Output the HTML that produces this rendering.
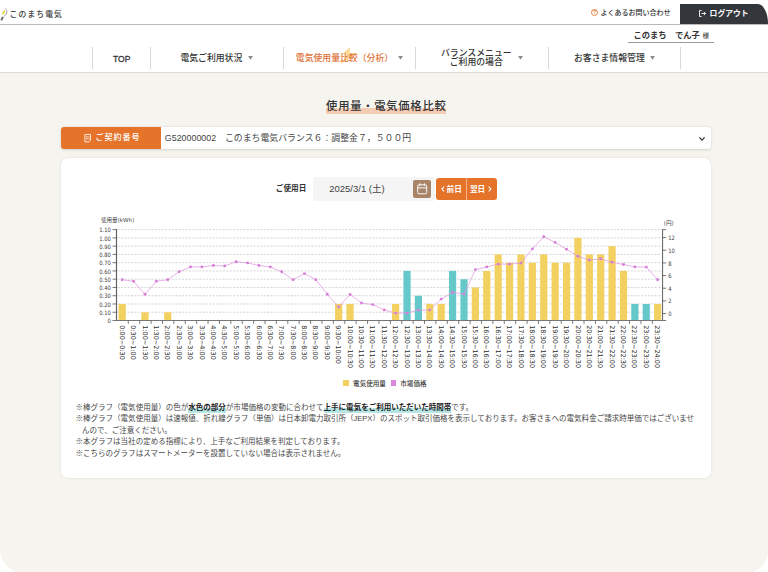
<!DOCTYPE html>
<html lang="ja">
<head>
<meta charset="utf-8">
<title>使用量・電気価格比較</title>
<style>
html,body{margin:0;padding:0;}
body{width:768px;height:572px;overflow:hidden;background:#fff;position:relative;
 font-family:"Liberation Sans","Noto Sans CJK JP",sans-serif;color:#333;}
.abs{position:absolute;white-space:nowrap;}
#logo{left:9.6px;top:7.6px;font-size:7.8px;letter-spacing:1.1px;font-weight:500;color:#3a3a3a;line-height:14px;}
#hline{left:0;top:24px;width:768px;height:1px;background:#b9b9b9;}
#faq{left:600.6px;top:7px;font-size:7px;line-height:12px;color:#333;font-weight:500;}
#faqi{left:590.8px;top:8.9px;width:5.6px;height:5.6px;border:0.9px solid #e8803f;border-radius:50%;color:#e8803f;font-size:5.2px;line-height:5.8px;text-align:center;font-weight:700;}
#logout{left:679.5px;top:4.4px;width:88.6px;height:19.6px;background:#33363b;border-top-right-radius:10.5px 19.6px;}
#logouttx{left:709.6px;top:6.6px;font-size:7.8px;line-height:14px;color:#fff;font-weight:700;}
#user{left:633.4px;top:27.5px;font-size:8.3px;line-height:14px;font-weight:700;color:#333;}
#user small{font-size:6.6px;font-weight:400;margin-left:2.8px;}
#uline{left:628px;top:41.8px;width:86px;height:1px;background:#9a9a9a;}
#navb{left:0;top:71.6px;width:768px;height:1.4px;background:#dcdad6;}
.sep{position:absolute;top:46.8px;width:1px;height:21.8px;background:#d8d8d8;margin-left:-0.3px;}
.nav{position:absolute;font-size:8.85px;line-height:9.2px;font-weight:500;color:#333;white-space:nowrap;text-align:center;}
.arr{position:absolute;font-size:5px;line-height:6px;color:#8e8e8e;top:55.2px;}
#main{left:0;top:73px;width:768px;height:499.5px;background:#f6f4ee;border-radius:0 0 22px 24px;}
#title{left:326.1px;top:97.8px;font-size:11.3px;letter-spacing:0.74px;line-height:16px;font-weight:500;color:#333;
 background:linear-gradient(transparent 65%,#f4cbb3 65%);}
#crow{left:61.3px;top:126.7px;width:649.4px;height:22px;background:#fff;border-radius:3px;box-shadow:0 0.5px 2.5px rgba(0,0,0,.15);}
#clab{left:61.3px;top:126.7px;width:100px;height:22px;background:#e5732a;border-radius:3px 0 0 3px;}
#clabtx{left:95.4px;top:131.1px;font-size:8px;letter-spacing:1px;line-height:14px;color:#fff;font-weight:500;}
#csel{left:164.8px;top:130.5px;font-size:8.88px;line-height:14px;color:#444;}
#card{left:61.3px;top:157.8px;width:649.4px;height:320.2px;background:#fff;border-radius:7px;box-shadow:0 0 3px rgba(0,0,0,.09);}
#dlab{left:275.8px;top:182.4px;font-size:7.65px;line-height:14px;font-weight:700;color:#333;}
#dinp{left:312.8px;top:177.2px;width:121.8px;height:23.4px;background:#f5f5f5;border-radius:3px;}
#dtx{left:329.2px;top:181.5px;font-size:9.5px;line-height:14px;color:#444;}
#cal{left:413.3px;top:180px;width:17.8px;height:17.8px;background:#a88569;border-radius:2px;}
#btn{left:435.8px;top:178.3px;width:61.6px;height:21.4px;background:#e5732a;border-radius:3px;}
#bdiv{left:466px;top:178.3px;width:0.8px;height:21.4px;background:#f3b48c;}
.btx{position:absolute;font-size:7.65px;line-height:14px;font-weight:700;color:#fff;top:182.9px;white-space:nowrap;}
svg.chart{position:absolute;left:0;top:205px;}
svg.chart text{font-family:"DejaVu Sans","Noto Sans CJK JP",sans-serif;fill:#444;}
svg.chart .yl{font-size:6px;fill:#404040;}
svg.chart .xl{font-size:6.5px;fill:#363636;stroke:#363636;stroke-width:0.07px;}
svg.chart .yt{font-size:5.6px;}
svg.chart .yt2{font-size:5.6px;}
.lg{position:absolute;width:5.5px;height:5.5px;top:380.2px;}
.lgt{position:absolute;font-size:6.55px;line-height:10px;top:378.5px;color:#3a3a3a;font-weight:500;white-space:nowrap;}
#notes{left:75.5px;top:402px;font-size:7.53px;line-height:11.4px;color:#484848;}
#notes b{font-weight:700;color:#222;padding-bottom:1px;background:linear-gradient(#b5e6e4,#b5e6e4) no-repeat 0 100%/100% 5.1px;}
</style>
</head>
<body>
<!-- header -->
<svg class="abs" style="left:0;top:8px" width="9" height="14" viewBox="0 0 9 14">
 <path d="M5.4 0.9 C7.7 2.6 7.2 6 3.8 8.5" fill="none" stroke="#8f8f8f" stroke-width="1"/>
 <path d="M4.7 2.3 C5.3 3.8 4.4 6 2.4 7 C1.8 5.4 2.8 3.2 4.7 2.3Z" fill="#e4d31c"/>
 <path d="M2.9 8.8 L1.3 12.3" stroke="#666" stroke-width="1.9"/>
</svg>
<div id="logo" class="abs">このまち電気</div>
<div id="hline" class="abs"></div>
<div id="faqi" class="abs">?</div>
<div id="faq" class="abs">よくあるお問い合わせ</div>
<div id="logout" class="abs"></div>
<svg class="abs" style="left:699.4px;top:10.2px" width="8" height="7" viewBox="0 0 8 7">
 <path d="M2.6 0.5 H0.5 V6.5 H2.6" fill="none" stroke="#fff" stroke-width="0.9"/>
 <path d="M2.4 3.5 H6.6 M4.9 1.8 L6.6 3.5 L4.9 5.2" fill="none" stroke="#fff" stroke-width="0.9"/>
</svg>
<div id="logouttx" class="abs">ログアウト</div>
<div id="user" class="abs">このまち　でん子<small>様</small></div>
<div id="uline" class="abs"></div>
<!-- nav -->
<div class="sep" style="left:92px"></div>
<div class="sep" style="left:150px"></div>
<div class="sep" style="left:283px"></div>
<div class="sep" style="left:415.3px"></div>
<div class="sep" style="left:548px"></div>
<div class="sep" style="left:680px"></div>
<div class="nav" style="left:112.6px;top:53.5px;font-family:'Liberation Sans',sans-serif;font-size:9.4px;font-weight:400;-webkit-text-stroke:0.3px #333;transform:scaleX(0.91);transform-origin:0 0;">TOP</div>
<div class="nav" style="left:180.4px;top:53.7px;">電気ご利用状況</div>
<svg class="abs" style="left:248.2px;top:55.8px" width="5" height="4" viewBox="0 0 5 4"><path d="M0.1 0.1 H4.9 L2.5 3.8 Z" fill="#8a8a8a"/></svg>
<svg class="abs" style="left:339px;top:46px" width="20" height="19" viewBox="0 0 20 19">
 <path d="M11.2 1 L2.8 8.6 L8.4 8.6 L1.4 18.2 L18.6 6.9 L10.6 6.9 Z" fill="#fcd994"/>
</svg>
<div class="nav" style="left:295.8px;top:53.7px;color:#e0733a;">電気使用量比較（分析）</div>
<svg class="abs" style="left:398.2px;top:55.8px" width="5" height="4" viewBox="0 0 5 4"><path d="M0.1 0.1 H4.9 L2.5 3.8 Z" fill="#8a8a8a"/></svg>
<div class="nav" style="left:441px;top:48.9px;">バランスメニュー<br>ご利用の場合</div>
<svg class="abs" style="left:517.8px;top:55.8px" width="5" height="4" viewBox="0 0 5 4"><path d="M0.1 0.1 H4.9 L2.5 3.8 Z" fill="#8a8a8a"/></svg>
<div class="nav" style="left:574px;top:53.7px;">お客さま情報管理</div>
<svg class="abs" style="left:649.6px;top:55.8px" width="5" height="4" viewBox="0 0 5 4"><path d="M0.1 0.1 H4.9 L2.5 3.8 Z" fill="#8a8a8a"/></svg>
<div id="navb" class="abs"></div>
<!-- main -->
<div id="main" class="abs"></div>
<div id="title" class="abs">使用量・電気価格比較</div>
<div id="crow" class="abs"></div>
<div id="clab" class="abs"></div>
<svg class="abs" style="left:83.6px;top:133.6px" width="8" height="9" viewBox="0 0 8 9">
 <path d="M0.9 0.5 H6.5 V6.3 L4.9 7.9 H0.9 Z" fill="none" stroke="#fff" stroke-width="0.85"/>
 <path d="M2 2.9 H5.4 M2 4.9 H5.4" stroke="#fff" stroke-width="0.75"/>
</svg>
<div id="clabtx" class="abs">ご契約番号</div>
<div id="csel" class="abs">G520000002　このまち電気バランス６：調整金７，５００円</div>
<svg class="abs" style="left:698.4px;top:135.9px" width="8" height="6" viewBox="0 0 8 6">
 <path d="M1.4 1.4 L4 4.1 L6.6 1.4" fill="none" stroke="#333" stroke-width="1.25"/>
</svg>
<div id="card" class="abs"></div>
<div id="dlab" class="abs">ご使用日</div>
<div id="dinp" class="abs"></div>
<div id="dtx" class="abs">2025/3/1 (土)</div>
<div id="cal" class="abs"></div>
<svg class="abs" style="left:417.4px;top:183.2px" width="10.4" height="11.6" viewBox="0 0 10.4 11.6">
 <rect x="0.7" y="1.8" width="9" height="9" rx="1.2" fill="none" stroke="#fff" stroke-width="0.95"/>
 <path d="M0.7 4.9 H9.7 M3 0.3 V3 M7.4 0.3 V3" stroke="#fff" stroke-width="0.95"/>
</svg>
<div id="btn" class="abs"></div>
<div id="bdiv" class="abs"></div>
<svg class="abs" style="left:441.4px;top:186.4px" width="4" height="6.4" viewBox="0 0 4 6.4"><path d="M3.1 0.7 L0.9 3.1 L3.1 5.5" fill="none" stroke="#fff" stroke-width="1.1"/></svg>
<div class="btx" style="left:446.6px;">前日</div>
<div class="btx" style="left:469.9px;">翌日</div>
<svg class="abs" style="left:488.2px;top:186.4px" width="4" height="6.4" viewBox="0 0 4 6.4"><path d="M0.7 0.7 L2.9 3.1 L0.7 5.5" fill="none" stroke="#fff" stroke-width="1.1"/></svg>
<svg class="chart" width="768" height="200" viewBox="0 205 768 200">
<line x1="117.5" x2="662.1" y1="312.24" y2="312.24" stroke="#b8b8b8" stroke-width="0.6" stroke-dasharray="2 1.4"/>
<line x1="117.5" x2="662.1" y1="303.98" y2="303.98" stroke="#b8b8b8" stroke-width="0.6" stroke-dasharray="2 1.4"/>
<line x1="117.5" x2="662.1" y1="295.72" y2="295.72" stroke="#b8b8b8" stroke-width="0.6" stroke-dasharray="2 1.4"/>
<line x1="117.5" x2="662.1" y1="287.46" y2="287.46" stroke="#b8b8b8" stroke-width="0.6" stroke-dasharray="2 1.4"/>
<line x1="117.5" x2="662.1" y1="279.20" y2="279.20" stroke="#b8b8b8" stroke-width="0.6" stroke-dasharray="2 1.4"/>
<line x1="117.5" x2="662.1" y1="270.94" y2="270.94" stroke="#b8b8b8" stroke-width="0.6" stroke-dasharray="2 1.4"/>
<line x1="117.5" x2="662.1" y1="262.68" y2="262.68" stroke="#b8b8b8" stroke-width="0.6" stroke-dasharray="2 1.4"/>
<line x1="117.5" x2="662.1" y1="254.42" y2="254.42" stroke="#b8b8b8" stroke-width="0.6" stroke-dasharray="2 1.4"/>
<line x1="117.5" x2="662.1" y1="246.16" y2="246.16" stroke="#b8b8b8" stroke-width="0.6" stroke-dasharray="2 1.4"/>
<line x1="117.5" x2="662.1" y1="237.90" y2="237.90" stroke="#b8b8b8" stroke-width="0.6" stroke-dasharray="2 1.4"/>
<line x1="117.5" x2="662.1" y1="229.64" y2="229.64" stroke="#b8b8b8" stroke-width="0.6" stroke-dasharray="2 1.4"/>
<rect x="118.60" y="303.98" width="7.2" height="16.52" fill="#f2d161"/>
<rect x="141.38" y="312.24" width="7.2" height="8.26" fill="#f2d161"/>
<rect x="164.17" y="312.24" width="7.2" height="8.26" fill="#f2d161"/>
<rect x="335.06" y="303.98" width="7.2" height="16.52" fill="#f2d161"/>
<rect x="346.46" y="303.98" width="7.2" height="16.52" fill="#f2d161"/>
<rect x="392.03" y="303.98" width="7.2" height="16.52" fill="#f2d161"/>
<rect x="403.42" y="270.94" width="7.2" height="49.56" fill="#66c9c9"/>
<rect x="414.81" y="295.72" width="7.2" height="24.78" fill="#66c9c9"/>
<rect x="426.21" y="303.98" width="7.2" height="16.52" fill="#f2d161"/>
<rect x="437.60" y="303.98" width="7.2" height="16.52" fill="#f2d161"/>
<rect x="448.99" y="270.94" width="7.2" height="49.56" fill="#66c9c9"/>
<rect x="460.39" y="279.20" width="7.2" height="41.30" fill="#66c9c9"/>
<rect x="471.78" y="287.46" width="7.2" height="33.04" fill="#f2d161"/>
<rect x="483.17" y="270.94" width="7.2" height="49.56" fill="#f2d161"/>
<rect x="494.57" y="254.42" width="7.2" height="66.08" fill="#f2d161"/>
<rect x="505.96" y="262.68" width="7.2" height="57.82" fill="#f2d161"/>
<rect x="517.35" y="254.42" width="7.2" height="66.08" fill="#f2d161"/>
<rect x="528.74" y="262.68" width="7.2" height="57.82" fill="#f2d161"/>
<rect x="540.14" y="254.42" width="7.2" height="66.08" fill="#f2d161"/>
<rect x="551.53" y="262.68" width="7.2" height="57.82" fill="#f2d161"/>
<rect x="562.92" y="262.68" width="7.2" height="57.82" fill="#f2d161"/>
<rect x="574.32" y="237.90" width="7.2" height="82.60" fill="#f2d161"/>
<rect x="585.71" y="254.42" width="7.2" height="66.08" fill="#f2d161"/>
<rect x="597.10" y="254.42" width="7.2" height="66.08" fill="#f2d161"/>
<rect x="608.50" y="246.16" width="7.2" height="74.34" fill="#f2d161"/>
<rect x="619.89" y="270.94" width="7.2" height="49.56" fill="#f2d161"/>
<rect x="631.28" y="303.98" width="7.2" height="16.52" fill="#66c9c9"/>
<rect x="642.67" y="303.98" width="7.2" height="16.52" fill="#66c9c9"/>
<rect x="654.07" y="303.98" width="7.2" height="16.52" fill="#f2d161"/>
<line x1="116.5" x2="116.5" y1="229.2" y2="321.1" stroke="#606060" stroke-width="1.15"/>
<line x1="662.6" x2="662.6" y1="229.2" y2="321.1" stroke="#606060" stroke-width="1"/>
<line x1="112.5" x2="666.2" y1="320.5" y2="320.5" stroke="#777" stroke-width="1.1"/>
<text x="107.6" y="323.10" class="yl" textLength="3.3" lengthAdjust="spacingAndGlyphs">0</text>
<line x1="112.5" x2="116.5" y1="312.24" y2="312.24" stroke="#555" stroke-width="0.8"/>
<text x="99.2" y="314.84" class="yl" textLength="11.7" lengthAdjust="spacingAndGlyphs">0.10</text>
<line x1="112.5" x2="116.5" y1="303.98" y2="303.98" stroke="#555" stroke-width="0.8"/>
<text x="99.2" y="306.58" class="yl" textLength="11.7" lengthAdjust="spacingAndGlyphs">0.20</text>
<line x1="112.5" x2="116.5" y1="295.72" y2="295.72" stroke="#555" stroke-width="0.8"/>
<text x="99.2" y="298.32" class="yl" textLength="11.7" lengthAdjust="spacingAndGlyphs">0.30</text>
<line x1="112.5" x2="116.5" y1="287.46" y2="287.46" stroke="#555" stroke-width="0.8"/>
<text x="99.2" y="290.06" class="yl" textLength="11.7" lengthAdjust="spacingAndGlyphs">0.40</text>
<line x1="112.5" x2="116.5" y1="279.20" y2="279.20" stroke="#555" stroke-width="0.8"/>
<text x="99.2" y="281.80" class="yl" textLength="11.7" lengthAdjust="spacingAndGlyphs">0.50</text>
<line x1="112.5" x2="116.5" y1="270.94" y2="270.94" stroke="#555" stroke-width="0.8"/>
<text x="99.2" y="273.54" class="yl" textLength="11.7" lengthAdjust="spacingAndGlyphs">0.60</text>
<line x1="112.5" x2="116.5" y1="262.68" y2="262.68" stroke="#555" stroke-width="0.8"/>
<text x="99.2" y="265.28" class="yl" textLength="11.7" lengthAdjust="spacingAndGlyphs">0.70</text>
<line x1="112.5" x2="116.5" y1="254.42" y2="254.42" stroke="#555" stroke-width="0.8"/>
<text x="99.2" y="257.02" class="yl" textLength="11.7" lengthAdjust="spacingAndGlyphs">0.80</text>
<line x1="112.5" x2="116.5" y1="246.16" y2="246.16" stroke="#555" stroke-width="0.8"/>
<text x="99.2" y="248.76" class="yl" textLength="11.7" lengthAdjust="spacingAndGlyphs">0.90</text>
<line x1="112.5" x2="116.5" y1="237.90" y2="237.90" stroke="#555" stroke-width="0.8"/>
<text x="99.2" y="240.50" class="yl" textLength="11.7" lengthAdjust="spacingAndGlyphs">1.00</text>
<line x1="112.5" x2="116.5" y1="229.64" y2="229.64" stroke="#555" stroke-width="0.8"/>
<text x="99.2" y="232.24" class="yl" textLength="11.7" lengthAdjust="spacingAndGlyphs">1.10</text>
<line x1="662.6" x2="666.2" y1="229.60" y2="229.60" stroke="#555" stroke-width="0.8"/>
<line x1="662.6" x2="666.2" y1="313.55" y2="313.55" stroke="#555" stroke-width="0.8"/>
<text x="668.2" y="316.15" class="yl" textLength="3.3" lengthAdjust="spacingAndGlyphs">0</text>
<line x1="662.6" x2="666.2" y1="300.89" y2="300.89" stroke="#555" stroke-width="0.8"/>
<text x="668.2" y="303.49" class="yl" textLength="3.3" lengthAdjust="spacingAndGlyphs">2</text>
<line x1="662.6" x2="666.2" y1="288.23" y2="288.23" stroke="#555" stroke-width="0.8"/>
<text x="668.2" y="290.83" class="yl" textLength="3.3" lengthAdjust="spacingAndGlyphs">4</text>
<line x1="662.6" x2="666.2" y1="275.57" y2="275.57" stroke="#555" stroke-width="0.8"/>
<text x="668.2" y="278.17" class="yl" textLength="3.3" lengthAdjust="spacingAndGlyphs">6</text>
<line x1="662.6" x2="666.2" y1="262.91" y2="262.91" stroke="#555" stroke-width="0.8"/>
<text x="668.2" y="265.51" class="yl" textLength="3.3" lengthAdjust="spacingAndGlyphs">8</text>
<line x1="662.6" x2="666.2" y1="250.25" y2="250.25" stroke="#555" stroke-width="0.8"/>
<text x="668.2" y="252.85" class="yl" textLength="6.6" lengthAdjust="spacingAndGlyphs">10</text>
<line x1="662.6" x2="666.2" y1="237.59" y2="237.59" stroke="#555" stroke-width="0.8"/>
<text x="668.2" y="240.19" class="yl" textLength="6.6" lengthAdjust="spacingAndGlyphs">12</text>
<line x1="128.29" x2="128.29" y1="320.5" y2="323.9" stroke="#555" stroke-width="0.8"/>
<line x1="139.69" x2="139.69" y1="320.5" y2="323.9" stroke="#555" stroke-width="0.8"/>
<line x1="151.08" x2="151.08" y1="320.5" y2="323.9" stroke="#555" stroke-width="0.8"/>
<line x1="162.47" x2="162.47" y1="320.5" y2="323.9" stroke="#555" stroke-width="0.8"/>
<line x1="173.87" x2="173.87" y1="320.5" y2="323.9" stroke="#555" stroke-width="0.8"/>
<line x1="185.26" x2="185.26" y1="320.5" y2="323.9" stroke="#555" stroke-width="0.8"/>
<line x1="196.65" x2="196.65" y1="320.5" y2="323.9" stroke="#555" stroke-width="0.8"/>
<line x1="208.04" x2="208.04" y1="320.5" y2="323.9" stroke="#555" stroke-width="0.8"/>
<line x1="219.44" x2="219.44" y1="320.5" y2="323.9" stroke="#555" stroke-width="0.8"/>
<line x1="230.83" x2="230.83" y1="320.5" y2="323.9" stroke="#555" stroke-width="0.8"/>
<line x1="242.22" x2="242.22" y1="320.5" y2="323.9" stroke="#555" stroke-width="0.8"/>
<line x1="253.62" x2="253.62" y1="320.5" y2="323.9" stroke="#555" stroke-width="0.8"/>
<line x1="265.01" x2="265.01" y1="320.5" y2="323.9" stroke="#555" stroke-width="0.8"/>
<line x1="276.40" x2="276.40" y1="320.5" y2="323.9" stroke="#555" stroke-width="0.8"/>
<line x1="287.79" x2="287.79" y1="320.5" y2="323.9" stroke="#555" stroke-width="0.8"/>
<line x1="299.19" x2="299.19" y1="320.5" y2="323.9" stroke="#555" stroke-width="0.8"/>
<line x1="310.58" x2="310.58" y1="320.5" y2="323.9" stroke="#555" stroke-width="0.8"/>
<line x1="321.97" x2="321.97" y1="320.5" y2="323.9" stroke="#555" stroke-width="0.8"/>
<line x1="333.37" x2="333.37" y1="320.5" y2="323.9" stroke="#555" stroke-width="0.8"/>
<line x1="344.76" x2="344.76" y1="320.5" y2="323.9" stroke="#555" stroke-width="0.8"/>
<line x1="356.15" x2="356.15" y1="320.5" y2="323.9" stroke="#555" stroke-width="0.8"/>
<line x1="367.55" x2="367.55" y1="320.5" y2="323.9" stroke="#555" stroke-width="0.8"/>
<line x1="378.94" x2="378.94" y1="320.5" y2="323.9" stroke="#555" stroke-width="0.8"/>
<line x1="390.33" x2="390.33" y1="320.5" y2="323.9" stroke="#555" stroke-width="0.8"/>
<line x1="401.73" x2="401.73" y1="320.5" y2="323.9" stroke="#555" stroke-width="0.8"/>
<line x1="413.12" x2="413.12" y1="320.5" y2="323.9" stroke="#555" stroke-width="0.8"/>
<line x1="424.51" x2="424.51" y1="320.5" y2="323.9" stroke="#555" stroke-width="0.8"/>
<line x1="435.90" x2="435.90" y1="320.5" y2="323.9" stroke="#555" stroke-width="0.8"/>
<line x1="447.30" x2="447.30" y1="320.5" y2="323.9" stroke="#555" stroke-width="0.8"/>
<line x1="458.69" x2="458.69" y1="320.5" y2="323.9" stroke="#555" stroke-width="0.8"/>
<line x1="470.08" x2="470.08" y1="320.5" y2="323.9" stroke="#555" stroke-width="0.8"/>
<line x1="481.48" x2="481.48" y1="320.5" y2="323.9" stroke="#555" stroke-width="0.8"/>
<line x1="492.87" x2="492.87" y1="320.5" y2="323.9" stroke="#555" stroke-width="0.8"/>
<line x1="504.26" x2="504.26" y1="320.5" y2="323.9" stroke="#555" stroke-width="0.8"/>
<line x1="515.65" x2="515.65" y1="320.5" y2="323.9" stroke="#555" stroke-width="0.8"/>
<line x1="527.05" x2="527.05" y1="320.5" y2="323.9" stroke="#555" stroke-width="0.8"/>
<line x1="538.44" x2="538.44" y1="320.5" y2="323.9" stroke="#555" stroke-width="0.8"/>
<line x1="549.83" x2="549.83" y1="320.5" y2="323.9" stroke="#555" stroke-width="0.8"/>
<line x1="561.23" x2="561.23" y1="320.5" y2="323.9" stroke="#555" stroke-width="0.8"/>
<line x1="572.62" x2="572.62" y1="320.5" y2="323.9" stroke="#555" stroke-width="0.8"/>
<line x1="584.01" x2="584.01" y1="320.5" y2="323.9" stroke="#555" stroke-width="0.8"/>
<line x1="595.41" x2="595.41" y1="320.5" y2="323.9" stroke="#555" stroke-width="0.8"/>
<line x1="606.80" x2="606.80" y1="320.5" y2="323.9" stroke="#555" stroke-width="0.8"/>
<line x1="618.19" x2="618.19" y1="320.5" y2="323.9" stroke="#555" stroke-width="0.8"/>
<line x1="629.59" x2="629.59" y1="320.5" y2="323.9" stroke="#555" stroke-width="0.8"/>
<line x1="640.98" x2="640.98" y1="320.5" y2="323.9" stroke="#555" stroke-width="0.8"/>
<line x1="652.37" x2="652.37" y1="320.5" y2="323.9" stroke="#555" stroke-width="0.8"/>
<text class="xl" transform="translate(119.80 325.2) rotate(90)">0:00~0:30</text>
<text class="xl" transform="translate(131.19 325.2) rotate(90)">0:30~1:00</text>
<text class="xl" transform="translate(142.58 325.2) rotate(90)">1:00~1:30</text>
<text class="xl" transform="translate(153.98 325.2) rotate(90)">1:30~2:00</text>
<text class="xl" transform="translate(165.37 325.2) rotate(90)">2:00~2:30</text>
<text class="xl" transform="translate(176.76 325.2) rotate(90)">2:30~3:00</text>
<text class="xl" transform="translate(188.15 325.2) rotate(90)">3:00~3:30</text>
<text class="xl" transform="translate(199.55 325.2) rotate(90)">3:30~4:00</text>
<text class="xl" transform="translate(210.94 325.2) rotate(90)">4:00~4:30</text>
<text class="xl" transform="translate(222.33 325.2) rotate(90)">4:30~5:00</text>
<text class="xl" transform="translate(233.73 325.2) rotate(90)">5:00~5:30</text>
<text class="xl" transform="translate(245.12 325.2) rotate(90)">5:30~6:00</text>
<text class="xl" transform="translate(256.51 325.2) rotate(90)">6:00~6:30</text>
<text class="xl" transform="translate(267.91 325.2) rotate(90)">6:30~7:00</text>
<text class="xl" transform="translate(279.30 325.2) rotate(90)">7:00~7:30</text>
<text class="xl" transform="translate(290.69 325.2) rotate(90)">7:30~8:00</text>
<text class="xl" transform="translate(302.08 325.2) rotate(90)">8:00~8:30</text>
<text class="xl" transform="translate(313.48 325.2) rotate(90)">8:30~9:00</text>
<text class="xl" transform="translate(324.87 325.2) rotate(90)">9:00~9:30</text>
<text class="xl" transform="translate(336.26 325.2) rotate(90)">9:30~10:00</text>
<text class="xl" transform="translate(347.66 325.2) rotate(90)">10:00~10:30</text>
<text class="xl" transform="translate(359.05 325.2) rotate(90)">10:30~11:00</text>
<text class="xl" transform="translate(370.44 325.2) rotate(90)">11:00~11:30</text>
<text class="xl" transform="translate(381.84 325.2) rotate(90)">11:30~12:00</text>
<text class="xl" transform="translate(393.23 325.2) rotate(90)">12:00~12:30</text>
<text class="xl" transform="translate(404.62 325.2) rotate(90)">12:30~13:00</text>
<text class="xl" transform="translate(416.01 325.2) rotate(90)">13:00~13:30</text>
<text class="xl" transform="translate(427.41 325.2) rotate(90)">13:30~14:00</text>
<text class="xl" transform="translate(438.80 325.2) rotate(90)">14:00~14:30</text>
<text class="xl" transform="translate(450.19 325.2) rotate(90)">14:30~15:00</text>
<text class="xl" transform="translate(461.59 325.2) rotate(90)">15:00~15:30</text>
<text class="xl" transform="translate(472.98 325.2) rotate(90)">15:30~16:00</text>
<text class="xl" transform="translate(484.37 325.2) rotate(90)">16:00~16:30</text>
<text class="xl" transform="translate(495.77 325.2) rotate(90)">16:30~17:00</text>
<text class="xl" transform="translate(507.16 325.2) rotate(90)">17:00~17:30</text>
<text class="xl" transform="translate(518.55 325.2) rotate(90)">17:30~18:00</text>
<text class="xl" transform="translate(529.94 325.2) rotate(90)">18:00~18:30</text>
<text class="xl" transform="translate(541.34 325.2) rotate(90)">18:30~19:00</text>
<text class="xl" transform="translate(552.73 325.2) rotate(90)">19:00~19:30</text>
<text class="xl" transform="translate(564.12 325.2) rotate(90)">19:30~20:00</text>
<text class="xl" transform="translate(575.52 325.2) rotate(90)">20:00~20:30</text>
<text class="xl" transform="translate(586.91 325.2) rotate(90)">20:30~21:00</text>
<text class="xl" transform="translate(598.30 325.2) rotate(90)">21:00~21:30</text>
<text class="xl" transform="translate(609.70 325.2) rotate(90)">21:30~22:00</text>
<text class="xl" transform="translate(621.09 325.2) rotate(90)">22:00~22:30</text>
<text class="xl" transform="translate(632.48 325.2) rotate(90)">22:30~23:00</text>
<text class="xl" transform="translate(643.87 325.2) rotate(90)">23:00~23:30</text>
<text class="xl" transform="translate(655.27 325.2) rotate(90)">23:30~24:00</text>
<polyline points="122.20,279.70 133.59,281.30 144.98,294.30 156.38,281.30 167.77,279.70 179.16,271.80 190.55,266.90 201.95,266.90 213.34,265.50 224.73,265.90 236.13,261.70 247.52,262.90 258.91,265.50 270.31,266.90 281.70,271.80 293.09,279.70 304.48,273.60 315.88,279.70 327.27,294.30 338.66,307.00 350.06,294.50 361.45,303.00 372.84,304.60 384.24,309.90 395.63,313.10 407.02,313.10 418.41,310.10 429.81,310.10 441.20,299.10 452.59,292.40 463.99,294.10 475.38,269.60 486.77,266.90 498.17,264.10 509.56,264.10 520.95,263.10 532.34,248.90 543.74,236.80 555.13,242.40 566.52,249.30 577.92,256.20 589.31,260.10 600.70,258.80 612.10,262.30 623.49,264.50 634.88,266.90 646.27,267.10 657.67,279.70" fill="none" stroke="#df95df" stroke-width="0.72" stroke-linejoin="round"/>
<circle cx="122.20" cy="279.70" r="1.45" fill="#d77fd8"/>
<circle cx="133.59" cy="281.30" r="1.45" fill="#d77fd8"/>
<circle cx="144.98" cy="294.30" r="1.45" fill="#d77fd8"/>
<circle cx="156.38" cy="281.30" r="1.45" fill="#d77fd8"/>
<circle cx="167.77" cy="279.70" r="1.45" fill="#d77fd8"/>
<circle cx="179.16" cy="271.80" r="1.45" fill="#d77fd8"/>
<circle cx="190.55" cy="266.90" r="1.45" fill="#d77fd8"/>
<circle cx="201.95" cy="266.90" r="1.45" fill="#d77fd8"/>
<circle cx="213.34" cy="265.50" r="1.45" fill="#d77fd8"/>
<circle cx="224.73" cy="265.90" r="1.45" fill="#d77fd8"/>
<circle cx="236.13" cy="261.70" r="1.45" fill="#d77fd8"/>
<circle cx="247.52" cy="262.90" r="1.45" fill="#d77fd8"/>
<circle cx="258.91" cy="265.50" r="1.45" fill="#d77fd8"/>
<circle cx="270.31" cy="266.90" r="1.45" fill="#d77fd8"/>
<circle cx="281.70" cy="271.80" r="1.45" fill="#d77fd8"/>
<circle cx="293.09" cy="279.70" r="1.45" fill="#d77fd8"/>
<circle cx="304.48" cy="273.60" r="1.45" fill="#d77fd8"/>
<circle cx="315.88" cy="279.70" r="1.45" fill="#d77fd8"/>
<circle cx="327.27" cy="294.30" r="1.45" fill="#d77fd8"/>
<circle cx="338.66" cy="307.00" r="1.45" fill="#d77fd8"/>
<circle cx="350.06" cy="294.50" r="1.45" fill="#d77fd8"/>
<circle cx="361.45" cy="303.00" r="1.45" fill="#d77fd8"/>
<circle cx="372.84" cy="304.60" r="1.45" fill="#d77fd8"/>
<circle cx="384.24" cy="309.90" r="1.45" fill="#d77fd8"/>
<circle cx="395.63" cy="313.10" r="1.45" fill="#d77fd8"/>
<circle cx="407.02" cy="313.10" r="1.45" fill="#d77fd8"/>
<circle cx="418.41" cy="310.10" r="1.45" fill="#d77fd8"/>
<circle cx="429.81" cy="310.10" r="1.45" fill="#d77fd8"/>
<circle cx="441.20" cy="299.10" r="1.45" fill="#d77fd8"/>
<circle cx="452.59" cy="292.40" r="1.45" fill="#d77fd8"/>
<circle cx="463.99" cy="294.10" r="1.45" fill="#d77fd8"/>
<circle cx="475.38" cy="269.60" r="1.45" fill="#d77fd8"/>
<circle cx="486.77" cy="266.90" r="1.45" fill="#d77fd8"/>
<circle cx="498.17" cy="264.10" r="1.45" fill="#d77fd8"/>
<circle cx="509.56" cy="264.10" r="1.45" fill="#d77fd8"/>
<circle cx="520.95" cy="263.10" r="1.45" fill="#d77fd8"/>
<circle cx="532.34" cy="248.90" r="1.45" fill="#d77fd8"/>
<circle cx="543.74" cy="236.80" r="1.45" fill="#d77fd8"/>
<circle cx="555.13" cy="242.40" r="1.45" fill="#d77fd8"/>
<circle cx="566.52" cy="249.30" r="1.45" fill="#d77fd8"/>
<circle cx="577.92" cy="256.20" r="1.45" fill="#d77fd8"/>
<circle cx="589.31" cy="260.10" r="1.45" fill="#d77fd8"/>
<circle cx="600.70" cy="258.80" r="1.45" fill="#d77fd8"/>
<circle cx="612.10" cy="262.30" r="1.45" fill="#d77fd8"/>
<circle cx="623.49" cy="264.50" r="1.45" fill="#d77fd8"/>
<circle cx="634.88" cy="266.90" r="1.45" fill="#d77fd8"/>
<circle cx="646.27" cy="267.10" r="1.45" fill="#d77fd8"/>
<circle cx="657.67" cy="279.70" r="1.45" fill="#d77fd8"/>
<text x="100.9" y="222" class="yt">使用量(kWh)</text>
<text x="663.8" y="224.9" class="yt2">(円)</text>
</svg>
<div class="lg" style="left:343.3px;background:#f2d161;"></div>
<div class="lgt" style="left:353.1px;">電気使用量</div>
<div class="lg" style="left:390.9px;background:#d989dc;"></div>
<div class="lgt" style="left:400.3px;">市場価格</div>
<div id="notes" class="abs">※棒グラフ（電気使用量）の色が<b>水色の部分</b>が市場価格の変動に合わせて<b>上手に電気をご利用いただいた時間帯</b>です。<br>※棒グラフ（電気使用量）は速報値、折れ線グラフ（単価）は日本卸電力取引所（JEPX）のスポット取引価格を表示しております。お客さまへの電気料金ご請求時単価ではございませ<br><span style="padding-left:6.4px">んので、ご注意ください。</span><br>※本グラフは当社の定める指標により、上手なご利用結果を判定しております。<br>※こちらのグラフはスマートメーターを設置していない場合は表示されません。</div>
</body>
</html>
